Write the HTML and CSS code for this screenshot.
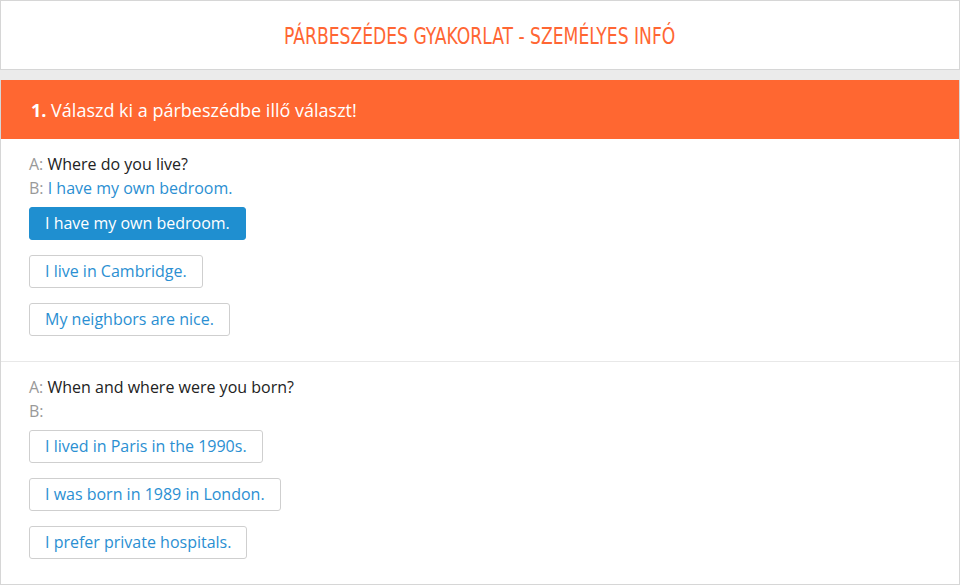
FILE: index.html
```html
<!DOCTYPE html>
<html lang="hu">
<head>
    <meta charset="UTF-8">
    <meta name="viewport" content="width=device-width, initial-scale=1.0">
    <title>Párbeszédes gyakorlat - Személyes infó</title>
    <link rel="stylesheet" href="styles.css">
</head>
<body>

    <div class="page-title">
        <h1>Párbeszédes gyakorlat - Személyes infó</h1>
    </div>

    <div class="exercise">
        <div class="exercise-head">
            <b>1.</b> Válaszd ki a párbeszédbe illő választ!
        </div>

        <!-- első kérdés -->
        <div class="dialog">
            <p class="line"><span class="who">A:</span> Where do you live?</p>
            <p class="line"><span class="who">B:</span> <span class="answer">I have my own bedroom.</span></p>
            <div class="options">
                <button class="option selected">I have my own bedroom.</button>
                <button class="option">I live in Cambridge.</button>
                <button class="option">My neighbors are nice.</button>
            </div>
        </div>

        <!-- második kérdés -->
        <div class="dialog">
            <p class="line"><span class="who">A:</span> When and where were you born?</p>
            <p class="line"><span class="who">B:</span> <span class="answer"></span></p>
            <div class="options">
                <button class="option">I lived in Paris in the 1990s.</button>
                <button class="option">I was born in 1989 in London.</button>
                <button class="option">I prefer private hospitals.</button>
            </div>
        </div>
    </div>

</body>
</html>
```

FILE: styles.css
```css
body {
    margin: 0;
    font-family: "Open Sans", Arial, sans-serif;
    background-color: #ebebeb;
    height: 585px;
    overflow: hidden;
}
.page-title {
    background-color: white;
    border: 1px solid #d6d6d6;
    height: 68px;
    display: flex;
    justify-content: center;
    align-items: center;
    margin-bottom: 10px;
}
.page-title h1 {
    margin: 2px 0 0;
    font-family: "DejaVu Sans Condensed", sans-serif;
    font-weight: normal;
    font-size: 23px;
    text-transform: uppercase;
    color: #ff6633;
    transform: scaleX(0.83);  /* keskenyebb betű */
}
.exercise {
    background-color: white;
    border: 1px solid #d6d6d6;
    border-top: none;
    height: 504px;
}
.exercise-head {
    background-color: #ff6731;
    color: white;
    font-size: 18px;
    height: 59px;
    line-height: 60px;
    padding: 0 30px;
}
.dialog {
    padding: 13px 28px 25px;
    border-bottom: 1px solid #e8e8e8;
}
.dialog:last-child {
    border-bottom: none;
}
.line {
    margin: 0;
    font-size: 16px;
    line-height: 24px;
    color: #222;
}
.who {
    color: #999;
}
.answer {
    color: #2b8fd2;
}
.options {
    display: flex;
    flex-direction: column;
    align-items: flex-start;
    gap: 15px;
    margin-top: 7px;
}
.option {
    font-family: "Open Sans", Arial, sans-serif;
    font-size: 16px;
    line-height: 23px;
    padding: 4px 15px;
    background-color: white;
    color: #2b8fd2;
    border: 1px solid #cfcfcf;
    border-radius: 3px;
    cursor: pointer;
}
.option.selected {
    background-color: #1f8fd0;
    border-color: #1f8fd0;
    color: white;
}
```
